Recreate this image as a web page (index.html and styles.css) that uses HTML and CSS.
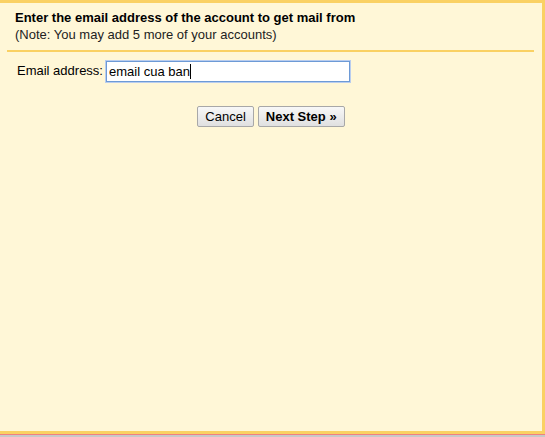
FILE: index.html
```html
<!DOCTYPE html>
<html lang="en">
<head>
    <meta charset="UTF-8">
    <title>Add mail account</title>
    <link rel="stylesheet" href="styles.css">
</head>
<body>
    <div class="dialog">
        <div class="header">
            <div class="title">Enter the email address of the account to get mail from</div>
            <div class="note">(Note: You may add 5 more of your accounts)</div>
        </div>
        <div class="form-row">
            <label for="email" class="label">Email address:</label>
            <span class="field-wrap">
                <input id="email" class="field" type="text" value="email cua ban">
                <span class="caret"></span>
            </span>
        </div>
        <div class="actions">
            <button class="btn">Cancel</button>
            <button class="btn btn-bold">Next Step &raquo;</button>
        </div>
    </div>
    <div class="below"></div>
</body>
</html>
```

FILE: styles.css
```css
html, body {
    margin: 0;
    padding: 0;
}
body {
    font-family: "Liberation Sans", Arial, sans-serif;
    font-size: 13px;
    color: #000;
    background-color: #c8c8c8;
}
.dialog {
    box-sizing: border-box;
    width: 545px;
    height: 434px;
    background-color: #fff7d7;
    border-top: 3px solid #fad163;
    border-right: 3px solid #fad163;
    border-bottom: 3px solid #fad163;
}
.header {
    margin: 0 8px 0 7px;
    padding: 6px 0 7px 8px;
    border-bottom: 2px solid #fad163;
    line-height: 17px;
}
.title {
    font-weight: bold;
}
.note {
    color: #222;
}
.form-row {
    display: flex;
    align-items: center;
    padding: 9px 0 0 17px;
}
.label {
    width: 89px;
    margin-top: -3px;
}
.field-wrap {
    position: relative;
    display: block;
}
.field {
    display: block;
    box-sizing: border-box;
    width: 244px;
    height: 21px;
    padding: 1px 2px;
    border: 1px solid #6d9ad6;
    box-shadow: 0 0 0 1px #b9cdee;
    font-family: "Liberation Sans", Arial, sans-serif;
    font-size: 13px;
    outline: none;
}
.caret {
    position: absolute;
    left: 84px;
    top: 3px;
    width: 1px;
    height: 15px;
    background-color: #000;
}
.actions {
    display: flex;
    justify-content: center;
    gap: 4px;
    padding: 24px 0 0 0;
}
.btn {
    height: 21px;
    padding: 0 7px;
    border: 1px solid #a8a8a8;
    border-radius: 2px;
    background: linear-gradient(#f8f8f8, #e0e0e0);
    font-family: "Liberation Sans", Arial, sans-serif;
    font-size: 13px;
    color: #000;
}
.btn-bold {
    font-weight: bold;
}
.below {
    height: 3px;
    border-top: 1px solid #f08080;
    background-color: #c8c8c8;
}
```
